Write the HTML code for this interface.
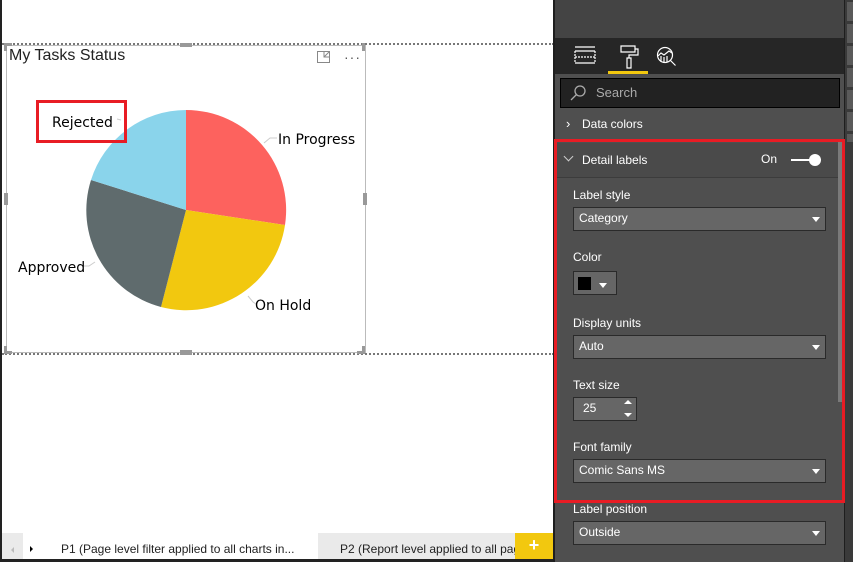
<!DOCTYPE html>
<html><head><style>
*{margin:0;padding:0;box-sizing:border-box}
body{width:853px;height:562px;position:relative;overflow:hidden;background:#fff;font-family:"Segoe UI","Liberation Sans",sans-serif}
.a{position:absolute}
.lbl{position:absolute;color:#fff;font-size:12px}
.dd{position:absolute;left:573px;width:253px;height:24px;background:#666;border:1px solid #2a2a2a;color:#fff;font-size:12px;padding:3px 5px}
.dd:after{content:"";position:absolute;right:5px;top:9px;border:4px solid transparent;border-top:5px solid #fff;border-bottom:0}
.cs{font-family:"Comic Sans MS","DejaVu Sans",sans-serif;font-size:14px;color:#000;position:absolute}
</style></head><body>
<div class="a" style="left:0;top:0;width:2px;height:562px;background:#222"></div>
<div class="a" style="left:2px;top:43px;width:552px;border-top:2px dotted #777"></div>
<div class="a" style="left:2px;top:353px;width:552px;border-top:2px dotted #777"></div>
<div class="a" style="left:6px;top:45px;width:360px;height:308px;border:1px solid #bbb"></div>
<div class="a" style="left:9px;top:47px;font-size:16px;color:#222">My Tasks Status</div>
<svg class="a" style="left:316px;top:50px" width="16" height="14" fill="none" stroke="#888"><rect x="1.5" y="1.5" width="12" height="11"/><path d="M8 2v5h5M8 7l5-5"/></svg>
<div class="a" style="left:344px;top:49px;font-size:14px;color:#555;letter-spacing:1px">···</div>
<svg class="a" style="left:0;top:0" width="560" height="362">
<path d="M186 210 L186 110 A100 100 0 0 1 285 225 Z" fill="#fd625e"/>
<path d="M186 210 L285 225 A100 100 0 0 1 161 307 Z" fill="#f2c80f"/>
<path d="M186 210 L161 307 A100 100 0 0 1 91 180 Z" fill="#5f6b6d"/>
<path d="M186 210 L91 180 A100 100 0 0 1 186 110 Z" fill="#8ad4eb"/>
<g stroke="#ccc" fill="none"><path d="M264 143 L270 138 L277 138"/><path d="M248 296 L253 302 L256 304"/><path d="M95 262 L89 266 L83 266"/><path d="M117 119 L121 120"/></g>
<g fill="#999"><rect x="180" y="43" width="12" height="4"/><rect x="180" y="350" width="12" height="5"/><rect x="4" y="193" width="4" height="12"/><rect x="363" y="193" width="4" height="12"/><rect x="4" y="43" width="3" height="8"/><rect x="4" y="43" width="8" height="3"/><rect x="362" y="43" width="3" height="8"/><rect x="4" y="346" width="3" height="8"/><rect x="4" y="351" width="8" height="3"/><rect x="362" y="346" width="3" height="8"/><rect x="357" y="351" width="8" height="3"/></g>
<rect x="37.5" y="101.5" width="88" height="40" fill="none" stroke="#e81c24" stroke-width="3"/>
</svg>
<div class="cs" style="left:52px;top:115px">Rejected</div>
<div class="cs" style="left:278px;top:132px">In Progress</div>
<div class="cs" style="left:18px;top:260px">Approved</div>
<div class="cs" style="left:255px;top:298px">On Hold</div>
<div class="a" style="left:2px;top:533px;width:551px;height:26px;background:#eaeaea"></div>
<div class="a" style="left:23px;top:533px;width:295px;height:26px;background:#fff"></div>
<div class="a" style="left:8px;top:547px;border:3px solid transparent;border-right:3px solid #bbb"></div>
<div class="a" style="left:30px;top:546px;border:3px solid transparent;border-left:3px solid #000"></div>
<div class="a" style="left:61px;top:542px;font-size:12px;color:#222;white-space:nowrap">P1 (Page level filter applied to all charts in...</div>
<div class="a" style="left:340px;top:542px;font-size:12px;color:#222;white-space:nowrap;width:175px;overflow:hidden">P2 (Report level applied to all pages)</div>
<div class="a" style="left:515px;top:533px;width:38px;height:26px;background:#f2c80f;color:#fff;font-size:18px;font-weight:bold;text-align:center;line-height:25px">+</div>
<div class="a" style="left:0;top:559px;width:555px;height:3px;background:#222"></div>
<div class="a" style="left:553px;top:0;width:300px;height:562px;background:#4f4f4f"></div>
<div class="a" style="left:553px;top:0;width:2px;height:562px;background:#1e1e1e"></div>
<div class="a" style="left:555px;top:0;width:289px;height:38px;background:#444"></div>
<div class="a" style="left:555px;top:38px;width:289px;height:36px;background:#262626"></div>
<div class="a" style="left:844px;top:0;width:1px;height:562px;background:#1e1e1e"></div>
<div class="a" style="left:845px;top:0;width:8px;height:562px;background:#3a3a3a"></div>
<div class="a" style="left:847px;top:2px;width:6px;height:140px;background:repeating-linear-gradient(#5a5a5a 0 19px,#3a3a3a 19px 22px)"></div>
<svg class="a" style="left:555px;top:38px" width="150" height="36" fill="none" stroke="#fff" stroke-width="1.2">
<path d="M20 9h20M20 13h20M20 25h20" /><path d="M20 13v12M40 13v12M20 19h20" stroke-dasharray="2 1"/>
<path d="M66 8h14v6h-14zM80 11h3v6h-9v3M72 20h4v10h-4z"/>
<circle cx="110" cy="17" r="7.5"/><path d="M103 18l3-3 3 2 5-4 3 2M106 18v6M109 19v5M112 18v6M115.5 22.5l5 5"/>
</svg>
<div class="a" style="left:608px;top:71px;width:40px;height:3px;background:#f2c80f"></div>
<div class="a" style="left:560px;top:78px;width:280px;height:30px;background:#222;border:1px solid #000"></div>
<svg class="a" style="left:570px;top:84px" width="18" height="18" fill="none" stroke="#aaa" stroke-width="1.3"><circle cx="10" cy="7" r="5"/><path d="M6.5 10.5L1 16"/></svg>
<div class="a" style="left:596px;top:85px;color:#aaa;font-size:13px">Search</div>
<div class="a" style="left:566px;top:116px;color:#fff;font-size:13px">›</div>
<div class="lbl" style="left:582px;top:117px">Data colors</div>
<div class="a" style="left:556px;top:143px;width:282px;height:35px;background:#4a4a4a;border-bottom:1px solid #3c3c3c"></div>
<div class="a" style="left:565px;top:153px;width:7px;height:7px;border-right:1.3px solid #ccc;border-bottom:1.3px solid #ccc;transform:rotate(45deg)"></div>
<div class="lbl" style="left:582px;top:153px">Detail labels</div>
<div class="lbl" style="left:761px;top:152px">On</div>
<div class="a" style="left:791px;top:159px;width:28px;height:2px;background:#fff"></div>
<div class="a" style="left:809px;top:154px;width:12px;height:12px;border-radius:50%;background:#fff"></div>
<div class="a" style="left:838px;top:140px;width:5px;height:262px;background:#7a7a7a"></div>
<div class="lbl" style="left:573px;top:188px">Label style</div>
<div class="dd" style="top:207px">Category</div>
<div class="lbl" style="left:573px;top:250px">Color</div>
<div class="a" style="left:573px;top:271px;width:44px;height:24px;background:#666;border:1px solid #2a2a2a"></div>
<div class="a" style="left:578px;top:277px;width:13px;height:13px;background:#000"></div>
<div class="a" style="left:599px;top:283px;border:4px solid transparent;border-top:5px solid #fff;border-bottom:0"></div>
<div class="lbl" style="left:573px;top:316px">Display units</div>
<div class="dd" style="top:335px">Auto</div>
<div class="lbl" style="left:573px;top:378px">Text size</div>
<div class="a" style="left:573px;top:397px;width:64px;height:24px;background:#666;border:1px solid #2a2a2a;color:#fff;font-size:12px;padding:3px 9px">25</div>
<div class="a" style="left:624px;top:400px;border:4px solid transparent;border-bottom:4px solid #fff;border-top:0"></div>
<div class="a" style="left:624px;top:413px;border:4px solid transparent;border-top:4px solid #fff;border-bottom:0"></div>
<div class="lbl" style="left:573px;top:440px">Font family</div>
<div class="dd" style="top:459px">Comic Sans MS</div>
<div class="a" style="left:554px;top:139px;width:291px;height:364px;border:3px solid #e81c24"></div>
<div class="lbl" style="left:573px;top:502px">Label position</div>
<div class="dd" style="top:521px">Outside</div>
</body></html>
